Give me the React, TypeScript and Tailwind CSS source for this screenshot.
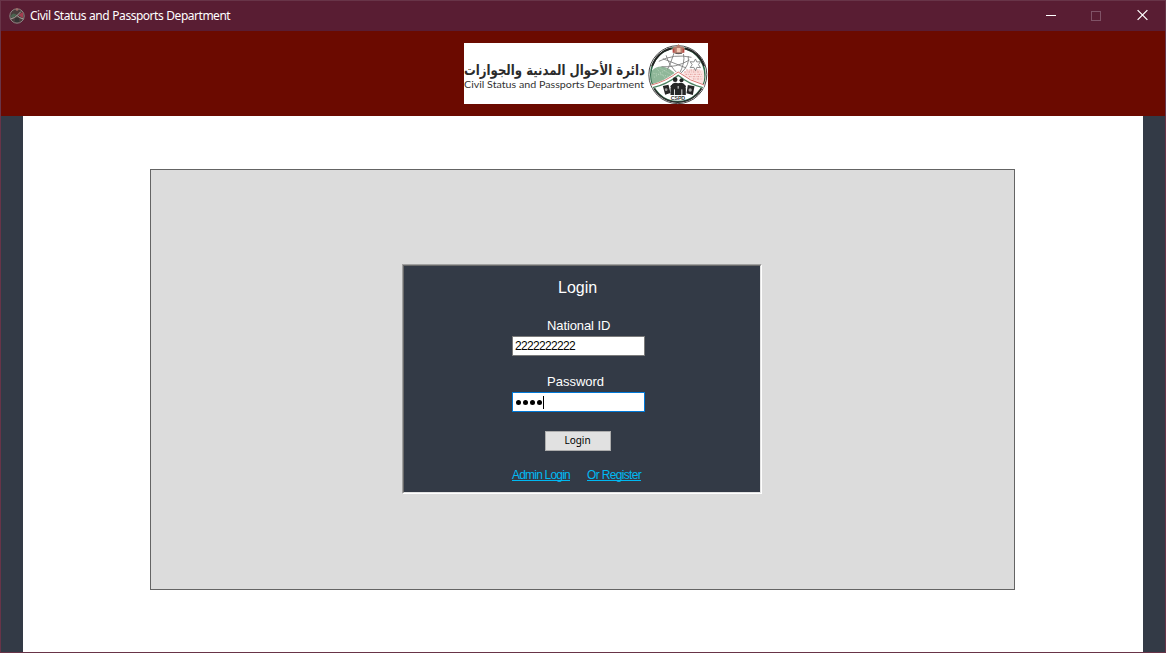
import React from "react";

function Emblem() {
  return (
    <>
      <circle cx="115" cy="104" r="87" fill="#fff" stroke="#4a4a4a" strokeWidth="3" />
      <circle cx="115" cy="104" r="81" fill="none" stroke="#2f6b4a" strokeWidth="5" />
      <path d="M96 25a82 82 0 0 0-58 54M136 25a82 82 0 0 1 58 54" fill="none" stroke="#222" strokeWidth="5" />
      <path d="M41 140a82 82 0 0 0 148 0" fill="none" stroke="#2b2b2b" strokeWidth="4" />
      <path d="M37 92Q70 60 117 110L40 133Q32 112 37 92Z" fill="#8fb799" />
      <path d="M42 100l60 12M44 112l40-26M52 86l30 34M60 84l40 22" stroke="#b9d3bc" strokeWidth="3" strokeDasharray="3 4" />
      <path d="M126 104q20-24 66-12q6 20-2 40z" fill="#fbe3e1" />
      <path d="M134 96h52M138 103h50M148 110h40M160 117h28M140 90h40" stroke="#e29c99" strokeWidth="3" strokeDasharray="5 3 2 3" />
      <g fill="none" stroke="#777" strokeWidth="2.500">
        <path d="M58 64Q104 40 156 52M66 80Q110 84 150 60M80 46Q86 74 118 104M104 38Q94 70 84 88M132 42Q138 68 118 104M146 48Q152 74 124 100M70 56L140 84" />
        <path d="M168 57l4 9 11-1-6 9 6 9-11-1-4 10-5-10-11 1 6-9-6-9 11 1z" fill="#fff" />
      </g>
      <path d="M38 140Q76 130 116 100Q154 130 193 140" fill="none" stroke="#fff" strokeWidth="13" />
      <path d="M36 135Q80 124 116 96Q152 124 194 135" fill="none" stroke="#dc7772" strokeWidth="3" />
      <path d="M40 143Q82 134 116 106Q150 134 190 143" fill="none" stroke="#4a8261" strokeWidth="4" />
      <path d="M70 138l17-4 6 25-16 5zM145 135l20 4-5 26-19-5z" fill="#252525" />
      <circle cx="80" cy="149" r="4" fill="#999" />
      <circle cx="152" cy="150" r="5" fill="#aaa" />
      <g fill="#262626">
        <circle cx="107" cy="119" r="7" />
        <circle cx="126" cy="121" r="6" />
        <circle cx="98" cy="139" r="5" />
        <circle cx="134" cy="139" r="5" />
        <path d="M93 145l5-13q9-6 18-2q9-4 18 2l5 13v20H93z" />
      </g>
      <path d="M105 148v17M116 138v8M127 148v17" stroke="#ddd" strokeWidth="3" />
      <path d="M98 27q4-9 12-7l7-8 7 8q8-2 12 7l-6 12q-13 7-26 0z" fill="#b98070" />
      <path d="M102 26v12M132 26v12" stroke="#bb4a45" strokeWidth="5" />
      <path d="M112 24h11v13h-11z" fill="#f2c9b5" />
      <path d="M108 40h19" stroke="#555" strokeWidth="3" />
    </>
  );
}

function Logo() {
  return (
    <svg width="244" height="61" viewBox="0 0 244 61" className="block overflow-visible bg-white">
      <g transform="translate(0 32) scale(1 .9)">
        <text x="181" y="0" direction="rtl" textAnchor="start" textLength="181" lengthAdjust="spacingAndGlyphs" fontSize="16" fontWeight="700" fill="#2b2b2b" className="font-['DejaVu_Sans',sans-serif]">دائرة الأحوال المدنية والجوازات</text>
      </g>
      <text x="0" y="45" textLength="180" lengthAdjust="spacingAndGlyphs" fontSize="10" fill="#333" className="font-[Lato,sans-serif]">Civil Status and Passports Department</text>
      <g transform="translate(175.500 -3) scale(.3333)">
        <Emblem />
        <text x="94" y="180" fontSize="16" fontWeight="700" textLength="43" fill="#333" className="font-['Liberation_Sans',sans-serif]">CSPD</text>
      </g>
    </svg>
  );
}

function TitleBar() {
  return (
    <header className="flex h-[30px] shrink-0 items-center bg-[#591d33] pl-2">
      <svg width="16" height="16" viewBox="0 0 16 16">
        <circle cx="8" cy="8" r="7.2" fill="#4a3c3c" stroke="#8b8382" />
        <path d="M1.500 9q2-6 6.500-2l-4 3z" fill="#4b6450" />
        <path d="M9 7l5-3v6z" fill="#a33d50" />
        <path d="M1.500 11Q6 10 8 7.500Q10 10 14.500 11M8 7.500l4-4" fill="none" stroke="#a9a19d" />
        <path d="M6 10h4v4H6z" fill="#333" />
        <circle cx="8" cy="1.500" r="1.300" fill="#a26b66" />
      </svg>
      <span className="ml-[5px] whitespace-nowrap font-['Noto_Sans',sans-serif] text-[12px] tracking-[-0.48px] [word-spacing:0.5px] text-white">Civil Status and Passports Department</span>
      <div className="ml-auto flex h-full">
        {["min", "max", "close"].map((kind) => (
          <svg key={kind} width="46" height="30" viewBox="0 0 46 30" fill="none" shapeRendering={kind === "close" ? "auto" : "crispEdges"} className={kind === "close" ? "w-[45px]" : ""}>
            {kind === "min" && <path d="M18 14.500h10" stroke="#fff" />}
            {kind === "max" && <path d="M17.500 10.500h9v9h-9z" stroke="#805266" />}
            {kind === "close" && <path d="M18 9l10 10M28 9L18 19" stroke="#fff" strokeWidth="1.300" />}
          </svg>
        ))}
      </div>
    </header>
  );
}

function LoginPanel() {
  return (
    <div className="h-[230px] w-[360px] border border-t-[#a0a0a0] border-l-[#a0a0a0] border-r-white border-b-white">
      <section className="flex h-full flex-col border border-t-[#696969] border-l-[#696969] border-r-[#e3e3e3] border-b-[#e3e3e3] bg-[#333a46] pl-[108px] font-['Liberation_Sans',sans-serif] text-white">
        <h1 className="mt-[10px] ml-[46px] h-6 whitespace-nowrap text-[16px] leading-6">Login</h1>
        <label className="mt-[16px] ml-[35px] h-5 whitespace-nowrap text-[13px] leading-5 tracking-[-0.1px]">National ID</label>
        <div className="flex h-5 w-[133px] items-center border border-[#7a7a7a] bg-white pl-[2px] text-[12px] tracking-[-0.67px] text-black">2222222222</div>
        <label className="mt-[16px] ml-[35px] h-5 whitespace-nowrap text-[13px] leading-5">Password</label>
        <div className="flex h-5 w-[133px] items-center border border-[#0078d7] bg-white pl-[2px]">
          <span className="flex gap-[1px] pt-[1px]">
            {[0, 1, 2, 3].map((dot) => (
              <span key={dot} className="flex w-[6px] justify-center"><i className="size-[5px] rounded-full bg-black" /></span>
            ))}
          </span>
          <i className="ml-px h-[13px] w-px bg-black" />
        </div>
        <button className="mt-[19px] ml-[33px] h-5 w-[66px] border border-[#adadad] bg-[#e1e1e1] pb-[2px] pr-px font-['Noto_Sans',sans-serif] text-[10px] leading-[16px] text-black">Login</button>
        <nav className="mt-[16px] flex text-[12px] leading-4 text-[#00b9f2] underline [text-decoration-skip-ink:none]">
          <a className="w-[75px] whitespace-nowrap tracking-[-0.8px]">Admin Login</a>
          <a className="whitespace-nowrap tracking-[-0.67px]">Or Register</a>
        </nav>
      </section>
    </div>
  );
}

export default function App() {
  return (
    <div className="flex h-[653px] w-[1166px] flex-col overflow-hidden border border-[#683448] bg-[#333a46]">
      <TitleBar />
      <div className="flex h-[85px] shrink-0 bg-[#6b0a00] pt-3 pl-[463px]"><Logo /></div>
      <main className="mx-[22px] min-h-0 flex-1 bg-white pt-[53px] pl-[127px]">
        <div className="flex h-[421px] w-[865px] border border-[#646464] bg-[#dcdcdc] pt-[94px] pl-[251px]">
          <LoginPanel />
        </div>
      </main>
    </div>
  );
}
